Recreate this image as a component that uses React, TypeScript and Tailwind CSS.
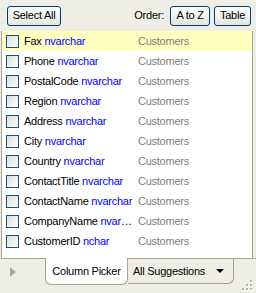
import React from 'react';

type Column = { name: string; type: string; table: string };

const COLUMNS: Column[] = [
  { name: 'Fax', type: 'nvarchar', table: 'Customers' },
  { name: 'Phone', type: 'nvarchar', table: 'Customers' },
  { name: 'PostalCode', type: 'nvarchar', table: 'Customers' },
  { name: 'Region', type: 'nvarchar', table: 'Customers' },
  { name: 'Address', type: 'nvarchar', table: 'Customers' },
  { name: 'City', type: 'nvarchar', table: 'Customers' },
  { name: 'Country', type: 'nvarchar', table: 'Customers' },
  { name: 'ContactTitle', type: 'nvarchar', table: 'Customers' },
  { name: 'ContactName', type: 'nvarchar', table: 'Customers' },
  { name: 'CompanyName', type: 'nvarchar', table: 'Customers' },
  { name: 'CustomerID', type: 'nchar', table: 'Customers' },
];

const XpButton: React.FC<{ label: string; className?: string }> = ({ label, className = '' }) => (
  <button
    className={`h-[20px] rounded-[3px] border border-[#003c74] bg-gradient-to-b from-white to-[#e6e5df] text-black leading-none ${className}`}
  >
    {label}
  </button>
);

const Checkbox: React.FC = () => (
  <span className="w-[13px] h-[13px] shrink-0 border border-[#1c5180] bg-gradient-to-br from-[#dcdcd7] to-white" />
);

export default function App() {
  return (
    <div
      className="w-[256px] h-[293px] bg-[#efeee6] flex flex-col text-[11px] tracking-[-0.25px] text-black overflow-hidden"
      style={{ fontFamily: '"Liberation Sans", Arial, sans-serif' }}
    >
      {/* toolbar */}
      <div className="h-[31px] shrink-0 flex items-center pl-[7px] pr-[5px]">
        <XpButton label="Select All" className="w-[54px]" />
        <span className="ml-auto mr-[6px]">Order:</span>
        <XpButton label="A to Z" className="w-[40px] mr-[4px]" />
        <XpButton label="Table" className="w-[37px]" />
      </div>

      {/* column list */}
      <div className="flex-1 ml-[1px] mr-[3px] bg-white border-l border-r border-[#a5a396]">
        {COLUMNS.map((c, i) => (
          <div
            key={c.name}
            className={`h-[20px] flex items-center pl-[4px] ${i === 0 ? 'bg-[#ffffbf]' : ''}`}
          >
            <Checkbox />
            <span className="ml-[5px] w-[112px] shrink-0 truncate">
              {c.name} <span className="text-[#0000ff]">{c.type}</span>
            </span>
            <span className="ml-[2px] text-[#808080]">{c.table}</span>
          </div>
        ))}
      </div>

      {/* tab strip */}
      <div className="h-[35px] shrink-0 flex border-t border-[#a5a396] ml-[1px]">
        <div className="w-[44px] flex items-start pt-[8px] pl-[9px]">
          <svg width="6" height="10" viewBox="0 0 6 10">
            <path d="M0 0 L6 5 L0 10 Z" fill="#a8a8a0" />
          </svg>
        </div>
        <div className="w-[83px] h-[27px] -mt-[1px] bg-white border-l border-r border-b border-[#a5a396] rounded-b-[6px] flex items-center justify-center">
          Column Picker
        </div>
        <div className="w-[106px] h-[25px] border-r border-b border-[#a5a396] rounded-br-[6px] flex items-center pl-[5px] pr-[9px]">
          <span>All Suggestions</span>
          <svg className="ml-auto" width="8" height="4" viewBox="0 0 8 4">
            <path d="M0 0 L8 0 L4 4 Z" fill="#000" />
          </svg>
        </div>
        <div className="flex-1 flex items-end justify-end pb-[2px] pr-[3px]">
          <svg width="11" height="11" viewBox="0 0 11 11">
            {[
              [8, 0], [8, 4], [4, 4], [8, 8], [4, 8], [0, 8],
            ].map(([x, y]) => (
              <g key={`${x}-${y}`}>
                <rect x={x + 1} y={y + 1} width="2" height="2" fill="#ffffff" />
                <rect x={x} y={y} width="2" height="2" fill="#b8b6a8" />
              </g>
            ))}
          </svg>
        </div>
      </div>
    </div>
  );
}
